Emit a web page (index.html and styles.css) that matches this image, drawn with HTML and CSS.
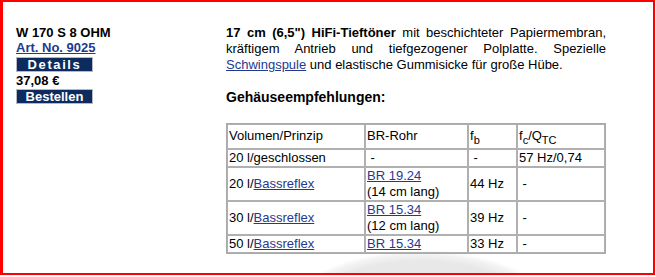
FILE: index.html
```html
<!DOCTYPE html>
<html lang="de">

<head>
  <meta charset="UTF-8">
  <title>W 170 S 8 OHM</title>
  <link rel="stylesheet" href="styles.css">
</head>

<body>
  <div class="product-frame">
    <div class="product-side">
      <div class="product-name">W 170 S 8 OHM</div>
      <a class="product-artno" href="#">Art. No. 9025</a>
      <a class="shop-button details-button" href="#">Details</a>
      <div class="product-price">37,08 &euro;</div>
      <a class="shop-button" href="#">Bestellen</a>
    </div>

    <div class="product-main">
      <p class="product-text">
        <b>17 cm (6,5") HiFi-Tieftöner</b> mit beschichteter Papiermembran,
        kräftigem Antrieb und tiefgezogener Polplatte. Spezielle
        <a href="#">Schwingspule</a> und elastische Gummisicke für große Hübe.
      </p>

      <h2 class="section-title">Gehäuseempfehlungen:</h2>

      <table class="cabinet-table">
        <tr class="head-row">
          <td class="col-volume">Volumen/Prinzip</td>
          <td class="col-tube">BR-Rohr</td>
          <td class="col-fb">f<sub>b</sub></td>
          <td class="col-fc">f<sub>c</sub>/Q<sub>TC</sub></td>
        </tr>
        <tr>
          <td>20 l/geschlossen</td>
          <td>&nbsp;-</td>
          <td>&nbsp;-</td>
          <td>57 Hz/0,74</td>
        </tr>
        <tr>
          <td>20 l/<a href="#">Bassreflex</a></td>
          <td><a href="#">BR 19.24</a><br>(14 cm lang)</td>
          <td>44 Hz</td>
          <td>&nbsp;-</td>
        </tr>
        <tr>
          <td>30 l/<a href="#">Bassreflex</a></td>
          <td><a href="#">BR 15.34</a><br>(12 cm lang)</td>
          <td>39 Hz</td>
          <td>&nbsp;-</td>
        </tr>
        <tr>
          <td>50 l/<a href="#">Bassreflex</a></td>
          <td><a href="#">BR 15.34</a></td>
          <td>33 Hz</td>
          <td>&nbsp;-</td>
        </tr>
      </table>
    </div>
  </div>
</body>

</html>
```

FILE: styles.css
```css
body {
  margin: 0;
  font-family: "Liberation Sans", Arial, sans-serif;
  font-size: 13px;
  color: #000;
  background-color: #fff;
}

a {
  color: #1f3a8f;
}

.product-frame {
  display: flex;
  width: 655px;
  height: 275px;
  box-sizing: border-box;
  padding: 23px 0 0 13px;
  border: 2px solid #f00;
  border-left-width: 3px;
  /* faint logo watermark at the bottom */
  background: radial-gradient(ellipse 150px 82px at 418px 330px, #e8e8e8 86%, #f2f2f2 94%, #fff 100%) no-repeat;
}

/* left column with name, price and buttons */
.product-side {
  width: 210px;
  flex-shrink: 0;
  font-weight: bold;
  line-height: 15px;
}

.product-artno {
  display: inline-block;
  margin-bottom: 2px;
}

.shop-button {
  display: block;
  width: 77px;
  height: 15px;
  box-sizing: border-box;
  background-color: #0d2b5e;
  border: 1px solid #b4b9c2;
  color: #fff;
  text-align: center;
  text-decoration: none;
  font-size: 13px;
  line-height: 13px;
}

.details-button {
  letter-spacing: 1.6px;
}

.product-price {
  margin: 1px 0 1px;
}

/* right column */
.product-main {
  width: 380px;
}

.product-text {
  margin: 0;
  line-height: 16px;
  text-align: justify;
}

.section-title {
  margin: 16px 0 18px;
  font-size: 14px;
  line-height: 16px;
}

.cabinet-table {
  width: 380px;
  border: 1px solid #a9a9a9;
  border-spacing: 0;
  font-size: 13px;
  line-height: 16px;
}

.cabinet-table td {
  border: 1px solid #b0b0b0;
  padding: 0 1px;
}

.head-row td {
  height: 22px;
  padding-bottom: 1px;
}

.cabinet-table sub {
  font-size: 11px;
  line-height: 0;
}

.col-volume {
  width: 134px;
}

.col-tube {
  width: 99px;
}

.col-fb {
  width: 45px;
}
```
